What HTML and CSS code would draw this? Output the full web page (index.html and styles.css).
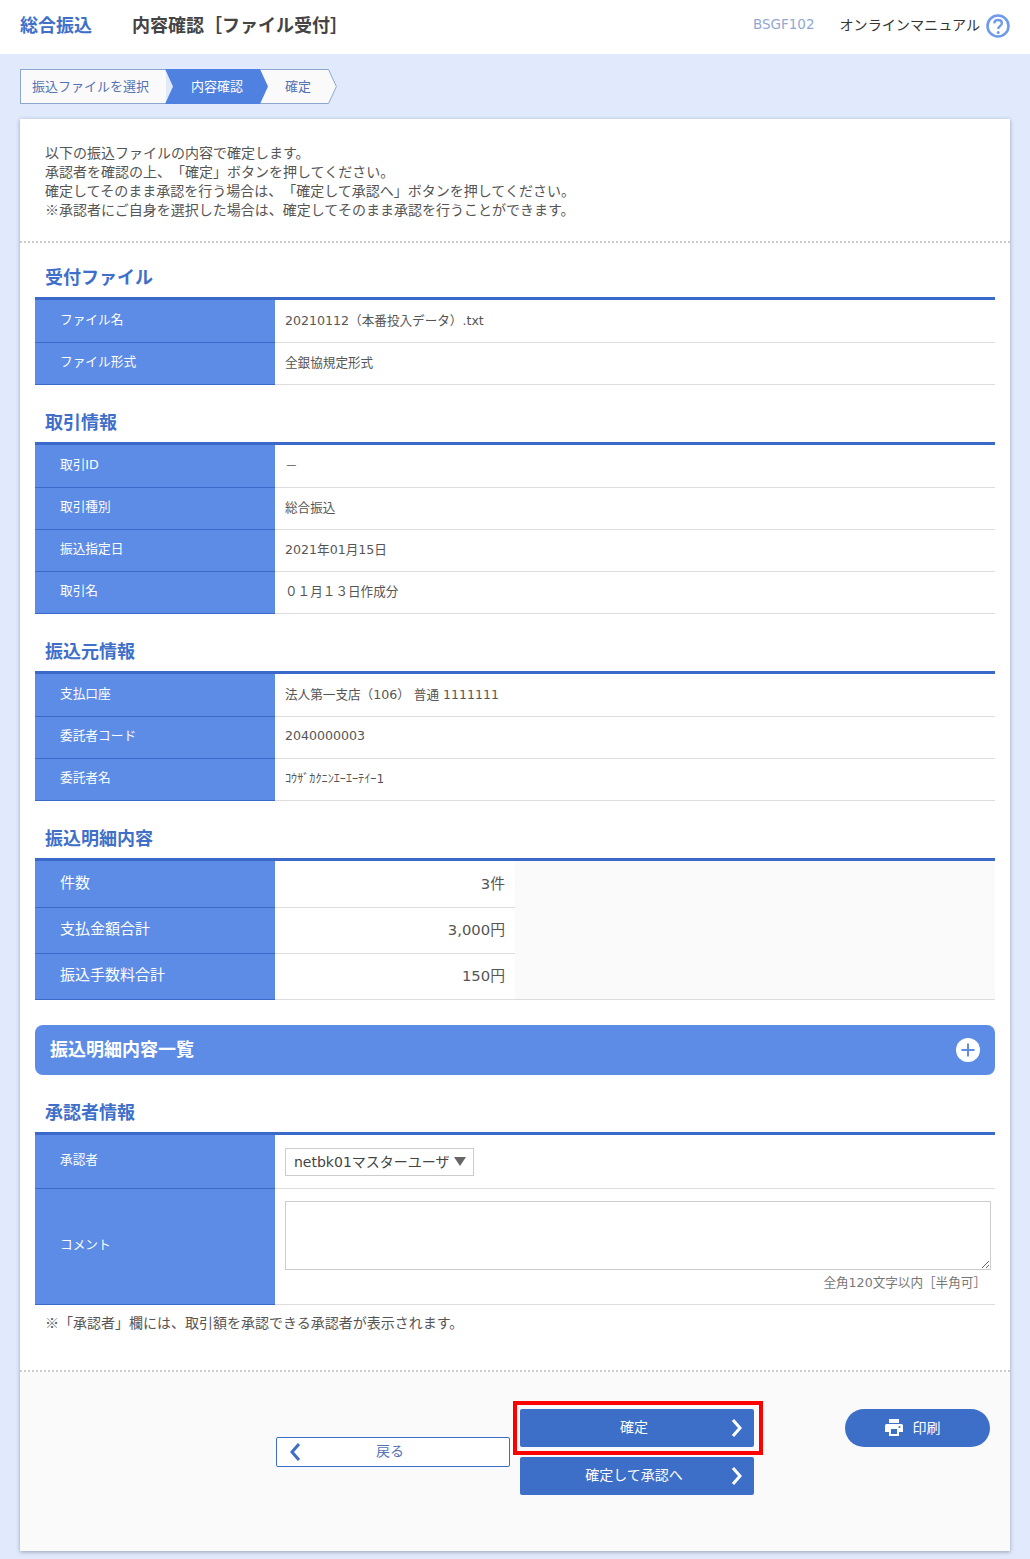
FILE: index.html
```html
<!DOCTYPE html>
<html lang="ja">
<head>
<meta charset="utf-8">
<title>総合振込 内容確認</title>
<link rel="stylesheet" href="styles.css">
</head>
<body>
<header class="topbar">
  <div class="topbar-cat">総合振込</div>
  <h1 class="topbar-title">内容確認［ファイル受付］</h1>
  <div class="topbar-code">BSGF102</div>
  <div class="topbar-manual">オンラインマニュアル</div>
  <svg class="help-icon" width="24" height="24" viewBox="0 0 24 24">
    <circle cx="12" cy="12" r="10.5" fill="#fff" stroke="#709aea" stroke-width="2.6"/>
    <path d="M8.2 9.4c.2-2.2 1.8-3.4 3.9-3.4 2.2 0 3.8 1.3 3.8 3.2 0 1.5-.9 2.3-2 3-1 .7-1.6 1.2-1.6 2.4v.5" fill="none" stroke="#709aea" stroke-width="2.3"/>
    <circle cx="12.2" cy="18.4" r="1.5" fill="#709aea"/>
  </svg>
</header>

<nav class="crumbs">
  <div class="crumb crumb-first">振込ファイルを選択</div>
  <div class="crumb crumb-active">内容確認</div>
  <div class="crumb crumb-last">確定</div>
  <svg class="crumb-end" width="9" height="35" viewBox="0 0 9 35">
    <polygon points="0,0.5 0.5,0.5 8.4,17.5 0.5,34.5 0,34.5" fill="#fafafa"/>
    <polyline points="0,0.5 0.5,0.5 8.4,17.5 0.5,34.5 0,34.5" fill="none" stroke="#8ea6d2"/>
  </svg>
</nav>

<main class="card">
  <section class="intro">
    <p>以下の振込ファイルの内容で確定します。</p>
    <p>承認者を確認の上、「確定」ボタンを押してください。</p>
    <p>確定してそのまま承認を行う場合は、「確定して承認へ」ボタンを押してください。</p>
    <p><span class="mark">※</span>承認者にご自身を選択した場合は、確定してそのまま承認を行うことができます。</p>
  </section>

  <section class="body">
    <h2 class="sec-title sec-title-first">受付ファイル</h2>
    <table class="info">
      <tr><th>ファイル名</th><td>20210112（本番投入データ）.txt</td></tr>
      <tr><th>ファイル形式</th><td>全銀協規定形式</td></tr>
    </table>

    <h2 class="sec-title">取引情報</h2>
    <table class="info">
      <tr><th>取引ID</th><td>－</td></tr>
      <tr><th>取引種別</th><td>総合振込</td></tr>
      <tr><th>振込指定日</th><td>2021年01月15日</td></tr>
      <tr><th>取引名</th><td>０１月１３日作成分</td></tr>
    </table>

    <h2 class="sec-title">振込元情報</h2>
    <table class="info">
      <tr><th>支払口座</th><td>法人第一支店（106） 普通 1111111</td></tr>
      <tr><th>委託者コード</th><td>2040000003</td></tr>
      <tr><th>委託者名</th><td class="kana">ｺｳｻﾞｶｸﾆﾝｴｰｴｰﾃｲｰ1</td></tr>
    </table>

    <h2 class="sec-title">振込明細内容</h2>
    <table class="info totals">
      <tr><th>件数</th><td class="num">3件</td><td class="rest" rowspan="3"></td></tr>
      <tr><th>支払金額合計</th><td class="num">3,000円</td></tr>
      <tr><th>振込手数料合計</th><td class="num">150円</td></tr>
    </table>

    <div class="fold">
      <span class="fold-label">振込明細内容一覧</span>
      <svg width="24" height="24" viewBox="0 0 24 24">
        <circle cx="12" cy="12" r="12" fill="#fff"/>
        <path d="M5.5 12h13M12 5.5v13" stroke="#5d8ce6" stroke-width="2"/>
      </svg>
    </div>

    <h2 class="sec-title">承認者情報</h2>
    <table class="info approver">
      <tr class="row-select">
        <th>承認者</th>
        <td>
          <div class="select-wrap">
            <select class="select"><option>netbk01マスターユーザ</option></select>
          </div>
        </td>
      </tr>
      <tr class="row-comment">
        <th>コメント</th>
        <td>
          <textarea class="comment"></textarea>
          <div class="limit">全角120文字以内［半角可］</div>
        </td>
      </tr>
    </table>
    <p class="note"><span class="mark">※</span>「承認者」欄には、取引額を承認できる承認者が表示されます。</p>
  </section>

  <footer class="actions">
    <a class="btn btn-back">
      <svg class="chev chev-left" width="12" height="20" viewBox="0 0 12 20"><polyline points="10,2 3,10 10,18" fill="none" stroke="#3d6fc9" stroke-width="3"/></svg>
      戻る
    </a>
    <div class="primary">
      <div class="highlight"></div>
      <a class="btn btn-main">確定
        <svg class="chev chev-right" width="12" height="20" viewBox="0 0 12 20"><polyline points="2,2 9,10 2,18" fill="none" stroke="#fff" stroke-width="3"/></svg>
      </a>
      <a class="btn btn-main">確定して承認へ
        <svg class="chev chev-right" width="12" height="20" viewBox="0 0 12 20"><polyline points="2,2 9,10 2,18" fill="none" stroke="#fff" stroke-width="3"/></svg>
      </a>
    </div>
    <a class="btn-print">
      <svg width="18" height="17" viewBox="0 0 18 17"><path d="M4 0h10v4H4zM1.5 5h15A1.5 1.5 0 0 1 18 6.5V13h-4v4H4v-4H0V6.5A1.5 1.5 0 0 1 1.5 5zM6 10v5h6v-5zM14.5 7a1 1 0 1 0 0 2 1 1 0 0 0 0-2z" fill="#fff" fill-rule="evenodd"/></svg>
      印刷
    </a>
  </footer>
</main>
</body>
</html>
```
FILE: styles.css
```css
* { box-sizing: border-box; }
html, body { margin: 0; padding: 0; }
body {
  background: #e0eafc;
  font-family: "DejaVu Sans", "Noto Sans CJK JP", sans-serif;
  color: #555;
  padding-bottom: 8px;
  text-spacing-trim: space-all;
}
p, h1, h2 { margin: 0; }
.mark { font-family: "Noto Sans CJK JP", sans-serif; line-height: 0; }

.topbar {
  height: 54px;
  background: #fff;
  display: flex;
  align-items: center;
  padding: 0 20px 7px;
}
.topbar-cat { font-size: 18px; font-weight: 700; color: #3f6fc9; width: 112px; }
.topbar-title { font-size: 18px; font-weight: 700; color: #444; flex: 1; }
.topbar-code { font-size: 13.5px; color: #92a8d4; margin-right: 25px; }
.topbar-manual { font-size: 14.1px; color: #333; margin-right: 6px; }
.help-icon { display: block; margin-top: 5px; }

.crumbs {
  display: flex;
  height: 35px;
  margin: 15px 0 15px 20px;
  font-size: 13px;
  color: #5472b4;
}
.crumb { display: flex; align-items: center; height: 35px; background: #fafafa; padding-bottom: 3px; }
.crumb-first {
  width: 146px;
  padding-left: 11px;
  border: 1px solid #8ea6d2;
  border-right: 0;
}
.crumb-active {
  width: 103px;
  margin-left: -1px;
  padding-left: 26px;
  background: #4f82e0;
  color: #fff;
  position: relative;
  z-index: 1;
  clip-path: polygon(0 0, 95px 0, 103px 50%, 95px 100%, 0 100%, 8px 50%);
}
.crumb-last {
  width: 68px;
  margin-left: -8px;
  padding-left: 25px;
  border-top: 1px solid #8ea6d2;
  border-bottom: 1px solid #8ea6d2;
}
.crumb-end { display: block; }

.card {
  margin: 0 20px;
  background: #fff;
  box-shadow: 0 1px 4px rgba(60, 70, 100, .45);
}
.intro {
  padding: 25px 25px 0;
  font-size: 14px;
  line-height: 19px;
  border-bottom: 2px dotted #ccc;
  height: 124px;
}
.body { padding: 0 15px 37px; border-bottom: 2px dotted #ccc; }

.sec-title {
  font-size: 18px;
  font-weight: 700;
  line-height: 24px;
  color: #3f6fc9;
  margin: 26px 0 7px;
  padding-left: 10px;
}
.sec-title-first { margin-top: 23px; }

.info {
  width: 960px;
  table-layout: fixed;
  border-collapse: separate;
  border-spacing: 0;
  border-top: 3px solid #3a69c9;
  font-size: 12.6px;
}
.info th {
  width: 240px;
  height: 42px;
  padding: 0 0 6px 25px;
  background: #5d8ce6;
  color: #fff;
  font-weight: 400;
  font-size: 12.7px;
  text-align: left;
  border-bottom: 1px solid #3a69c9;
}
.info td {
  height: 42px;
  padding: 0 10px 4px;
  border-bottom: 1px solid #ddd;
  color: #555;
}
.info tr:first-child th, .info tr:first-child td { height: 43px; }
.info .kana { font-size: 12.2px; }

.info.totals th { height: 46px; font-size: 15px; }
.info.totals tr:first-child th, .info.totals tr:first-child td { height: 47px; }
.info.totals td { height: 46px; }
.info.totals .num { width: 240px; text-align: right; font-size: 14.8px; }
.info.totals .rest { background: #fafafa; padding: 0; }

.fold {
  margin-top: 25px;
  height: 50px;
  background: #5d8ce6;
  border-radius: 8px;
  padding: 0 15px;
  display: flex;
  align-items: center;
  justify-content: space-between;
  color: #fff;
}
.fold-label { font-size: 18px; font-weight: 700; padding-bottom: 5px; }
.fold svg { display: block; }

.info.approver .row-select th, .info.approver .row-select td { height: 54px; }
.info.approver .row-select td { padding: 0 10px; }
.info.approver .row-comment th, .info.approver .row-comment td { height: 116px; }
.info.approver .row-comment td { padding: 12px 4px 0 10px; vertical-align: top; }
.select-wrap { position: relative; width: 189px; height: 28px; }
.select-wrap::after {
  content: "";
  position: absolute;
  right: 8px;
  top: 9px;
  border-left: 6px solid transparent;
  border-right: 6px solid transparent;
  border-top: 9px solid #666;
  pointer-events: none;
}
.select {
  appearance: none;
  display: block;
  width: 100%;
  height: 100%;
  padding: 0 0 0 8px;
  border: 1px solid #ccc;
  border-radius: 0;
  background: #fff;
  color: #444;
  font-family: inherit;
  font-size: 14px;
}
.comment {
  display: block;
  width: 706px;
  height: 69px;
  margin: 0;
  border: 1px solid #ccc;
  background: #fff;
}
.limit {
  text-align: right;
  padding-right: 5px;
  margin-top: 3px;
  font-size: 12.6px;
  line-height: 19px;
  color: #777;
}
.note {
  margin-top: 9px;
  padding-left: 10px;
  font-size: 14px;
  line-height: 19px;
}

.actions {
  height: 179px;
  background: #fafafa;
  display: flex;
  align-items: flex-start;
  padding: 37px 20px 0 256px;
}
.btn {
  position: relative;
  display: flex;
  align-items: center;
  justify-content: center;
  width: 234px;
  padding: 0 6px 4px 0;
  font-size: 14px;
}
.btn-back {
  height: 30px;
  margin-top: 28px;
  margin-right: 10px;
  background: #fff;
  border: 1px solid #3d6fc9;
  border-radius: 2px;
  color: #5472b4;
}
.primary {
  position: relative;
  display: flex;
  flex-direction: column;
  gap: 10px;
}
.btn-main {
  height: 38px;
  background: #3d6fc9;
  border-radius: 2px;
  color: #fff;
}
.chev { position: absolute; top: 50%; margin-top: -10px; }
.chev-left { left: 12px; }
.chev-right { right: 11px; }
.highlight {
  position: absolute;
  left: -7px;
  top: -8px;
  width: 250px;
  height: 54px;
  border: 4px solid #f00;
  pointer-events: none;
}
.btn-print {
  display: flex;
  align-items: center;
  justify-content: center;
  gap: 10px;
  width: 145px;
  height: 38px;
  margin-left: 91px;
  padding: 0 10px 2px 0;
  background: #3d6fc9;
  border-radius: 19px;
  color: #fff;
  font-size: 14px;
}
```
